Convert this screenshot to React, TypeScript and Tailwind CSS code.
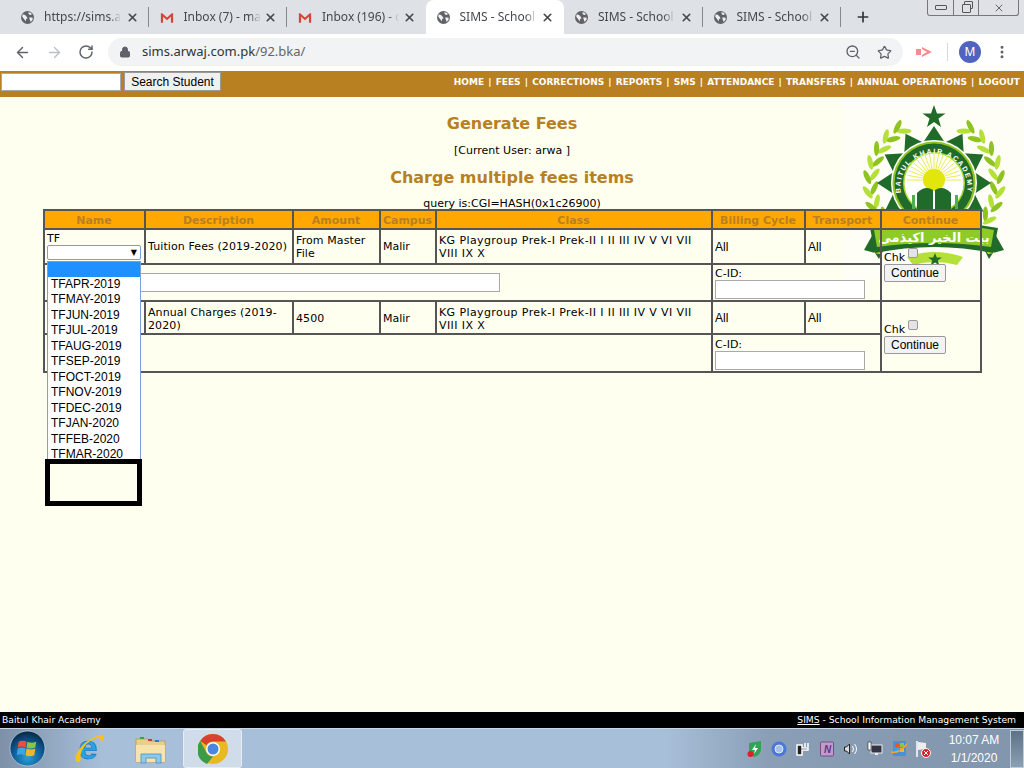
import { ArrowLeft, ArrowRight, RotateCw, Lock, ZoomOut, Star, MoreVertical, X, Plus } from "lucide-react";

const verdana = "font-['DejaVu_Sans',sans-serif]";
const arial = "font-['Liberation_Sans',Arial,sans-serif]";

const tabs = [
  { title: "https://sims.arwaj", icon: "globe", sep: true },
  { title: "Inbox (7) - mail", icon: "gmail", sep: true },
  { title: "Inbox (196) - crm", icon: "gmail", sep: false },
  { title: "SIMS - School Info", icon: "globe", active: true, sep: false },
  { title: "SIMS - School Info", icon: "globe", sep: true },
  { title: "SIMS - School Info", icon: "globe", sep: true },
];

const feeMonths = [
  "TFAPR-2019", "TFMAY-2019", "TFJUN-2019", "TFJUL-2019", "TFAUG-2019", "TFSEP-2019",
  "TFOCT-2019", "TFNOV-2019", "TFDEC-2019", "TFJAN-2020", "TFFEB-2020", "TFMAR-2020",
];

const navLinks = ["HOME", "FEES", "CORRECTIONS", "REPORTS", "SMS", "ATTENDANCE", "TRANSFERS", "ANNUAL OPERATIONS", "LOGOUT"];

const headers = [
  { label: "Name", w: "w-[101px]" },
  { label: "Description", w: "w-[148px]" },
  { label: "Amount", w: "w-[87px]" },
  { label: "Campus", w: "w-[56px]" },
  { label: "Class", w: "w-[276px]" },
  { label: "Billing Cycle", w: "w-[93px]" },
  { label: "Transport", w: "w-[76px]" },
  { label: "Continue", w: "w-[100px]" },
];

const cell = "border-2 border-[#555] pl-[2.500px] pr-[2px] leading-[13px]";

function Globe() {
  return (
    <svg width="13" height="13" viewBox="0 0 16 16" className="shrink-0">
      <circle cx="8" cy="8" r="8" fill="#5f6368" />
      <path d="M2 4l3 1 2 2 1 2-2 1v3L3 9 1.500 7zM9 1.500l3 .5 1.500 2-2 1-2-1zM10 8h4l.5 2-2.500 3.500-1-2z" fill="#fff" opacity="0.9" />
    </svg>
  );
}

function Gmail() {
  return (
    <svg width="14" height="11" viewBox="0 0 16 12" className="shrink-0">
      <path d="M1 12V1h1.500L8 6l5.500-5H15v11h-2.500V5L8 9 3.500 5v7z" fill="#d5453a" />
    </svg>
  );
}

function Tab({ title, icon, active, sep }: { title: string; icon: string; active?: boolean; sep?: boolean }) {
  return (
    <div className={`relative flex h-[34px] w-[138.5px] shrink-0 items-center pl-[11px] ${active ? "rounded-t-lg bg-white" : ""}`}>
      {icon === "globe" ? <Globe /> : <Gmail />}
      <span className="ml-[10px] w-[77px] overflow-hidden whitespace-nowrap text-[12px] text-[#45484c] font-['Noto_Sans',sans-serif] [mask-image:linear-gradient(90deg,#000_85%,transparent)]">
        {title}
      </span>
      <X size={13} strokeWidth={3} className="ml-auto mr-[10px] text-[#45484c]" />
      {sep && <div className="absolute right-0 top-[7px] h-[20px] w-px bg-[#85888c]" />}
    </div>
  );
}

function BrowserBar() {
  return (
    <div className="h-[71px] shrink-0 bg-white">
      <div className="relative flex h-[34px] bg-[#dee1e6] pl-[10px]">
        {tabs.map((t, i) => (
          <Tab key={i} title={t.title} icon={t.icon} active={t.active} sep={t.sep} />
        ))}
        <Plus size={16} strokeWidth={2.5} className="ml-[14px] mt-[9px] text-[#333]" />
        <div className="absolute right-[5px] top-0 flex h-[16px] w-[92px] rounded-b-[3px] border border-t-0 border-[#777]">
          <div className="flex w-[26px] items-center justify-center border-r border-[#777]">
            <div className="h-[5px] w-[12px] rounded-[1px] border border-[#555]" />
          </div>
          <div className="relative flex w-[25px] items-center justify-center border-r border-[#777]">
            <div className="absolute left-[10px] top-[1px] h-[8px] w-[9px] rounded-[1px] border border-[#555]" />
            <div className="relative mt-[2px] h-[9px] w-[9px] rounded-[1px] border border-[#555] bg-[#dee1e6]" />
          </div>
          <div className="flex flex-1 items-center justify-center">
            <X size={12} className="text-[#666]" />
          </div>
        </div>
      </div>
      <div className="flex h-[36px] items-center pl-[14px]">
        <ArrowLeft size={17} strokeWidth={2} className="text-[#5f6368]" />
        <ArrowRight size={17} strokeWidth={2} className="ml-[15px] text-[#bdc1c6]" />
        <RotateCw size={16} strokeWidth={2.2} className="ml-[15px] text-[#5f6368]" />
        <div className="ml-[14px] flex h-[28px] w-[795px] items-center rounded-full bg-[#f1f3f4] pl-[11px]">
          <Lock size={12} fill="#5f6368" strokeWidth={2} className="text-[#5f6368]" />
          <span className="ml-[11px] text-[13px] text-[#333] font-['Noto_Sans',sans-serif]">
            sims.arwaj.com.pk<span className="text-[#666]">/92.bka/</span>
          </span>
          <ZoomOut size={16} className="ml-auto text-[#5f6368]" />
          <Star size={15} strokeWidth={2} className="ml-[16px] mr-[11px] text-[#5f6368]" />
        </div>
        <svg width="18" height="12" viewBox="0 0 18 12" className="ml-[13px]">
          <rect x="0" y="3" width="5" height="6" fill="#f98a8e" />
          <path d="M6 1l10 5-10 5V9l5-3-5-3z" fill="#f98a8e" />
        </svg>
        <div className="ml-[13px] h-[18px] w-px bg-[#d5d7da]" />
        <div className="ml-[11px] flex h-[22px] w-[22px] items-center justify-center rounded-full bg-[#4f63c0] text-[12px] text-white font-['Noto_Sans',sans-serif]">
          M
        </div>
        <MoreVertical size={16} strokeWidth={2.5} className="ml-[13px] text-[#5f6368]" />
      </div>
    </div>
  );
}

function Logo() {
  const cx = 91;
  const cy = 86;
  const pts: string[] = [];
  for (let i = 0; i < 24; i++) {
    const r = i % 2 === 0 ? 57 : 42;
    const a = (i * 15 - 90) * (Math.PI / 180);
    pts.push(`${cx + r * Math.cos(a)},${cy + r * Math.sin(a)}`);
  }
  const rays = Array.from({ length: 19 }, (_, i) => (-180 + i * 10) * (Math.PI / 180));
  const leafAngles = [30, 43, 56, 69, 82, 95, 108, 121, 134];
  const leaf = (r: number, t: number, tilt: number, fill: string) => {
    const rad = (t * Math.PI) / 180;
    const x = cx + r * Math.sin(rad);
    const y = cy - r * Math.cos(rad);
    return <ellipse cx={x} cy={y} rx="7.500" ry="2.600" fill={fill} transform={`rotate(${t + tilt} ${x} ${y})`} />;
  };
  return (
    <svg width="181" height="183" viewBox="0 0 181 183" className="absolute left-[843px] top-0">
      <rect width="181" height="183" fill="#fefef6" />
      <path d="M91 8l3 8.500h8.500l-7 5 2.500 8.500-7-5-7 5 2.500-8.500-7-5H88z" fill="#216b2a" />
      {[0, 1].map((flip) => (
        <g key={flip} transform={flip ? `translate(${2 * cx} 0) scale(-1 1)` : undefined}>
          {leafAngles.map((t, i) => (
            <g key={t}>
              {leaf(60, t, -30, i % 2 ? "#8fc31f" : "#b5e03a")}
              {leaf(67, t + 3, 30, i % 2 ? "#b5e03a" : "#8fc31f")}
            </g>
          ))}
        </g>
      ))}
      <polygon points={pts.join(" ")} fill="#216b2a" />
      <circle cx={cx} cy={cy} r="43" fill="#fff" />
      <circle cx={cx} cy={cy} r="41.500" fill="#8fc31f" />
      <circle cx={cx} cy={cy} r="39.500" fill="#216b2a" />
      <circle cx={cx} cy={cy} r="31" fill="#a6d82c" />
      <circle cx={cx} cy={cy} r="29.500" fill="#fff" />
      {rays.map((a, i) => (
        <line key={i} x1={cx + 10 * Math.cos(a)} y1={cy - 3 + 10 * Math.sin(a)} x2={cx + 27 * Math.cos(a)} y2={cy - 3 + 27 * Math.sin(a)} stroke="#e6e620" strokeWidth="0.800" />
      ))}
      <circle cx={cx} cy={cy - 3} r="11" fill="#e2e60a" />
      <path id="logoArc" d={`M${cx - 32} ${cy + 14}A33.500 33.500 0 1 1 ${cx + 32} ${cy + 14}`} fill="none" />
      <text fontSize="7" fontWeight="700" fill="#fff" letterSpacing="1.500" className={arial}>
        <textPath href="#logoArc" startOffset="50%" textAnchor="middle">
          BAITUL KHAIR ACADEMY
        </textPath>
      </text>
      <rect x="69" y="98" width="3" height="15" fill="#4caf50" />
      <rect x="112" y="98" width="3" height="15" fill="#4caf50" />
      <path d="M74 96q8-8 16-3v20H74zM108 96q-8-8-16-3v20h16z" fill="#216b2a" />
      <path d="M64 160q27-10 56 0l-6 8q-22-6-44 0z" fill="#b5e03a" />
      <path d="M30 137l-9 16 11 3 4 6 6-12z" fill="#216b2a" />
      <path d="M152 137l9 16-11 3-4 6-6-12z" fill="#216b2a" />
      <path d="M36 148l-5 8 6 1 3-5zM146 148l5 8-6 1-3-5z" fill="#d8e020" />
      <path d="M27 131Q91 119 155 131l-5 25Q91 144 32 156z" fill="#216b2a" />
      <path d="M31 133Q91 121 151 133l-3 17Q91 142 34 150z" fill="#8ecb26" />
      <path d="M92 156l1.800 4.500h5l-4 3 1.500 5-4.300-3-4.300 3 1.500-5-4-3h5z" fill="#216b2a" />
      <text x="91" y="145" textAnchor="middle" fontSize="13" fontWeight="700" fill="#fff" className={verdana}>
        بيت الخير اكيذمى
      </text>
    </svg>
  );
}

function ContinueCell() {
  return (
    <td rowSpan={2} className={`${cell} align-middle`}>
      <div className="flex items-start text-[11px] text-black">
        <span className="mt-[3px]">Chk</span>
        <span className="ml-[3px] h-[10px] w-[10px] rounded-[2px] border border-[#999] bg-[#e4e4e4]" />
      </div>
      <button className={`block h-[18px] w-[62px] rounded-[2px] border border-[#999] bg-[#f3f3f3] text-[12px] leading-none text-black ${arial}`}>
        Continue
      </button>
    </td>
  );
}

function FeeRows({ desc, amount, open }: { desc: string; amount: string; open?: boolean }) {
  const rowPad = open ? "" : "pt-[2px]";
  return (
    <>
      <tr className={open ? "h-[35px]" : "h-[33px]"}>
        <td className={`${cell} ${open ? "pt-[2px] align-top" : ""}`}>
          {open && (
            <div className="relative">
              <div>TF</div>
              <div className="flex h-[15px] w-[94px] items-center justify-end rounded-[2px] border border-[#7a9ed8] bg-white pr-[3px] text-[8px] text-black">
                ▼
              </div>
              <div className={`absolute left-0 top-[29px] z-10 w-[94px] border border-[#7a9ed8] bg-white text-[12px] leading-[15.45px] text-black ${arial}`}>
                <div className="h-[15px] bg-[#1e90ff]" />
                {feeMonths.map((m) => (
                  <div key={m} className="pl-[3px]">
                    {m}
                  </div>
                ))}
              </div>
              <div className="absolute left-[-2px] top-[227px] z-20 h-[47px] w-[97px] border-[5px] border-black bg-[#fffff0]" />
            </div>
          )}
        </td>
        <td className={`${cell} ${rowPad} tracking-[0.1px]`}>{desc}</td>
        <td className={`${cell} ${rowPad} tracking-[0.1px]`}>{amount}</td>
        <td className={`${cell} ${rowPad}`}>Malir</td>
        <td className={`${cell} ${rowPad} tracking-[0.4px]`}>
          KG Playgroup Prek-I Prek-II I II III IV V VI VII
          <br />
          VIII IX X
        </td>
        <td className={`${cell} pt-[2px] ${arial} text-[12px]`}>All</td>
        <td className={`${cell} pt-[2px] ${arial} text-[12px]`}>All</td>
        <ContinueCell />
      </tr>
      <tr className={open ? "h-[37px]" : "h-[38px]"}>
        <td colSpan={5} className={`${cell} align-top pt-[8px]`}>
          {open && <div className="ml-[3px] h-[19px] w-[450px] border border-[#a9a9a9] bg-white" />}
        </td>
        <td colSpan={2} className={`${cell} align-bottom pb-[1px]`}>
          <div>C-ID:</div>
          <div className="h-[19px] w-[150px] border border-[#a9a9a9] bg-white" />
        </td>
      </tr>
    </>
  );
}

function WinOrb() {
  return (
    <svg width="37" height="37" viewBox="0 0 38 38">
      <defs>
        <radialGradient id="orb" cx="50%" cy="75%" r="70%">
          <stop offset="0%" stopColor="#2aa0d8" />
          <stop offset="70%" stopColor="#0c4f86" />
          <stop offset="100%" stopColor="#0a2c4a" />
        </radialGradient>
      </defs>
      <circle cx="19" cy="19" r="18" fill="url(#orb)" stroke="#b6d0df" strokeWidth="0.800" />
      <path d="M10 12q4-2 8 0l-1 6q-4-2-8 0z" fill="#e8552c" />
      <path d="M19 12q4 2 9 0l-1 6q-5 2-9 0z" fill="#8cc63f" />
      <path d="M9 19q4-2 8 0l-1 7q-4-2-8 0z" fill="#3fa4e6" />
      <path d="M18 19q5 2 9 0l-1 7q-5 2-9 0z" fill="#f6b42a" />
    </svg>
  );
}

function IeIcon() {
  return (
    <svg width="32" height="34" viewBox="0 0 32 34">
      <text x="15" y="27" textAnchor="middle" fontSize="34" fontWeight="700" fill="#2aa3e6" stroke="#0e6fb8" strokeWidth="0.600" className={arial}>
        e
      </text>
      <path d="M3 29C0 20 16 4 29 3c3 1 1 6-1 9 0-4 0-6-3-6C15 7 5 20 8 28c-1 2-4 3-5 1z" fill="#f3c316" />
    </svg>
  );
}

function FolderIcon() {
  return (
    <svg width="32" height="30" viewBox="0 0 32 30">
      <path d="M1 5h12l2 2h15v21H1z" fill="#e9cf8a" stroke="#b99a50" strokeWidth="0.800" />
      <rect x="5" y="3" width="4" height="2" fill="#3aa53a" />
      <rect x="13" y="5" width="4" height="2" fill="#c9402a" />
      <rect x="20" y="6" width="4" height="2" fill="#2a7ac9" />
      <path d="M1 11h29v17H1z" fill="#f6e3ae" />
      <path d="M6 29v-9h20v9h-5v-5H11v5z" fill="#8cc9ea" stroke="#4a90c2" strokeWidth="0.800" />
    </svg>
  );
}

function ChromeIcon() {
  return (
    <svg width="30" height="30" viewBox="0 0 30 30">
      <circle cx="15" cy="15" r="15" fill="#e8b923" />
      <path d="M15 0a15 15 0 0 1 13 7.500H15a7.500 7.500 0 0 0-6.500 3.750L2.200 7A15 15 0 0 1 15 0z" fill="#d8412f" />
      <path d="M2.200 7l6.300 11.700A7.500 7.500 0 0 0 15 22.500L9 30A15 15 0 0 1 2.200 7z" fill="#3c9b47" />
      <circle cx="15" cy="15" r="7" fill="#fff" />
      <circle cx="15" cy="15" r="5.500" fill="#4a86e0" />
    </svg>
  );
}

function Tray() {
  return (
    <div className="flex items-center gap-[8px] pr-[13px]">
      <svg width="16" height="18" viewBox="0 0 16 18">
        <path d="M2 3l12-2v8q0 6-7 8-5-3-5-8z" fill="#31a354" />
        <path d="M9 4L5 10h3l-1 4 4-6H8z" fill="#fff" />
        <circle cx="3.500" cy="14" r="3" fill="#e01f26" />
      </svg>
      <svg width="16" height="16" viewBox="0 0 16 16">
        <circle cx="8" cy="8" r="7.500" fill="#4a78d8" />
        <circle cx="8" cy="8" r="4" fill="#a8c0e8" stroke="#e0e8f8" />
      </svg>
      <svg width="16" height="17" viewBox="0 0 16 17" fill="none" stroke="#fff" strokeWidth="1.500">
        <path d="M2 5h5v3h6v2H7v5H2zM10 3v4M13 3v4" fill="#222" />
      </svg>
      <svg width="16" height="16" viewBox="0 0 15 16">
        <rect x="1" y="1" width="13" height="14" rx="1" fill="#b8a0c8" stroke="#7a4a8c" />
        <text x="8" y="12" textAnchor="middle" fontSize="10" fontStyle="italic" fontWeight="700" fill="#7a2a8c" className={arial}>
          N
        </text>
      </svg>
      <svg width="16" height="14" viewBox="0 0 15 14" fill="none" stroke="#fff" strokeWidth="1">
        <path d="M1 5h2l3-3v10L3 9H1z" fill="#ddd" stroke="#222" />
        <path d="M9 4q2 3 0 6M11 2q4 5 0 10" />
      </svg>
      <svg width="16" height="16" viewBox="0 0 16 16">
        <rect x="4" y="4" width="11" height="8" fill="#334" stroke="#eee" />
        <rect x="8" y="12" width="3" height="2" fill="#eee" />
        <rect x="1" y="1" width="3" height="8" fill="#fff" stroke="#222" strokeWidth="0.600" />
      </svg>
      <svg width="16" height="17" viewBox="0 0 16 17">
        <rect x="2" y="1" width="13" height="15" fill="#4a90d8" />
        <rect x="4" y="3" width="4" height="4" fill="#e8552c" />
        <rect x="9" y="3" width="4" height="4" fill="#8cc63f" />
        <rect x="4" y="8" width="4" height="4" fill="#3fa4e6" />
        <rect x="9" y="8" width="4" height="4" fill="#f6b42a" />
        <path d="M0 12Q8 14 16 4" stroke="#f6a71a" strokeWidth="1.500" fill="none" />
      </svg>
      <svg width="16" height="18" viewBox="0 0 16 18">
        <path d="M2 1v16" stroke="#fff" strokeWidth="1.500" />
        <path d="M3 2l8 1v6l-8 1z" fill="#eee" />
        <circle cx="11" cy="13" r="4.500" fill="#d8232a" stroke="#fff" />
        <path d="M9 11l4 4M13 11l-4 4" stroke="#fff" />
      </svg>
    </div>
  );
}

export default function App() {
  return (
    <div className={`flex h-[768px] w-[1024px] flex-col overflow-hidden bg-[#fffff0] ${verdana}`}>
      <BrowserBar />

      <div className="flex h-[26px] shrink-0 items-start justify-between bg-[#b88020] pr-[4px] pt-[1px]">
        <div className={`flex items-start ${arial}`}>
          <div className="ml-[1px] mt-[1px] h-[18px] w-[120px] border border-[#a9a9a9] bg-white" />
          <button className="ml-[3px] h-[19px] w-[97px] border border-[#999] bg-[#f0f0f0] text-[12px] leading-none text-black">Search Student</button>
        </div>
        <div className="flex gap-[4.130px] text-[9px] font-bold leading-[20px] text-white">
          {navLinks.map((l, i) => (
            <span key={l} className="whitespace-nowrap">
              {i > 0 && <span className="mr-[4.130px]">|</span>}
              {l}
            </span>
          ))}
        </div>
      </div>

      <div className="relative flex-1 text-[11px] text-black">
        <Logo />
        <div className="relative flex flex-col items-center">
          <h1 className="mt-[17px] text-[16px] font-bold leading-[20px] text-[#b88020]">Generate Fees</h1>
          <p className="mt-[10px] text-[11px] leading-[14px]">[Current User: arwa ]</p>
          <h2 className="mt-[10px] text-[16px] font-bold leading-[20px] text-[#b88020]">Charge multiple fees items</h2>
          <p className="mt-[11px] text-[11px] leading-[10px]">query is:CGI=HASH(0x1c26900)</p>
          <table className="w-[937px] table-fixed border-collapse">
            <colgroup>
              {headers.map((h) => (
                <col key={h.label} className={h.w} />
              ))}
            </colgroup>
            <thead>
              <tr className="h-[19px] bg-[#ffa800]">
                {headers.map((h) => (
                  <th key={h.label} className="border-2 border-[#555] p-0 pt-[2px] text-center text-[11px] font-bold leading-[15px] text-[#b88020]">
                    {h.label}
                  </th>
                ))}
              </tr>
            </thead>
            <tbody>
              <FeeRows desc="Tuition Fees (2019-2020)" amount="From Master File" open />
              <FeeRows desc="Annual Charges (2019-2020)" amount="4500" />
            </tbody>
          </table>
        </div>
      </div>

      <div className="flex h-[16px] shrink-0 items-center justify-between bg-black pl-[2px] pr-[8px] text-[9.200px] text-white">
        <span>Baitul Khair Academy</span>
        <span>
          <span className="underline">SIMS</span> - School Information Management System
        </span>
      </div>

      <div className="flex h-[40px] shrink-0 items-center border-t border-[#c8d6e6] bg-[linear-gradient(90deg,#7d90a8_0%,#a8bfd9_10%,#a8bfd9_65%,#8a9fb6_75%,#8196ad_100%)]">
        <div className="ml-[9px]"><WinOrb /></div>
        <div className="ml-[27px]"><IeIcon /></div>
        <div className="ml-[30px]"><FolderIcon /></div>
        <div className="ml-[16px] flex h-[39px] w-[59px] items-center justify-center rounded-[3px] border border-[#e4ecf4] bg-[#d0dcea]">
          <ChromeIcon />
        </div>
        <div className="ml-auto flex items-center">
          <Tray />
          <div className={`w-[60px] text-center text-[12px] leading-[18px] text-white ${arial}`}>
            <div>10:07 AM</div>
            <div>1/1/2020</div>
          </div>
          <div className="ml-[6px] h-[38px] w-[14px] border border-[#c0ccd8] bg-[linear-gradient(#5f7285,#8aa0b4)]" />
        </div>
      </div>
    </div>
  );
}
